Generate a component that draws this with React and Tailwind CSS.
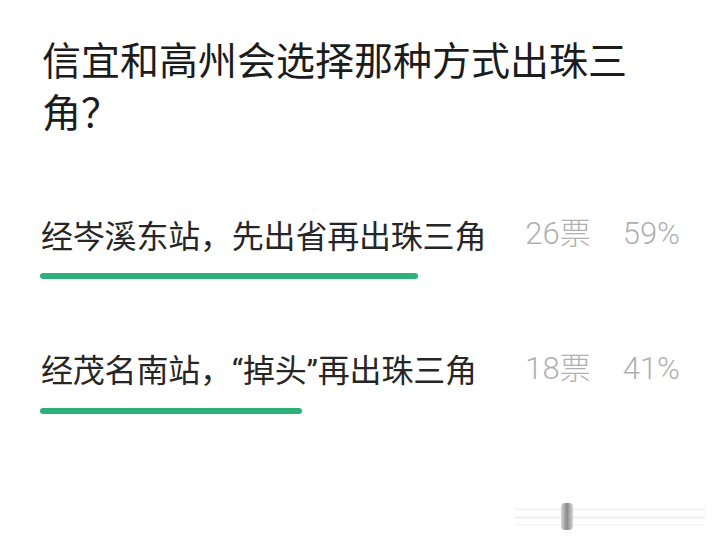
const latin = { fontFamily: "Roboto, sans-serif" };

const options = [
  { id: 1, label: <>经岑溪东站，先出省再出珠三角</>, votes: 26, pct: 59 },
  {
    id: 2,
    label: (
      <>
        经茂名南站，<span style={latin}>“</span>掉头<span style={latin}>”</span>再出珠三角
      </>
    ),
    votes: 18,
    pct: 41,
  },
];

function App() {
  return (
    <div
      className="relative w-[720px] h-[544px] bg-white overflow-hidden px-10 pt-[32px]"
      style={{ fontFamily: '"Noto Sans CJK SC", "Noto Sans", sans-serif' }}
    >
      <h1 className="text-[39px] leading-[52px] text-[#1c1c1c] font-normal pl-[2px] pr-[50px]">
        信宜和高州会选择那种方式出珠三角？
      </h1>

      <div className="mt-[76px] flex flex-col gap-[68px]">
        {options.map((o) => (
          <div key={o.id} className="flex flex-col gap-[17px]">
            <div className="flex items-center justify-between h-[44px]">
              <span className="text-[32px] leading-[44px] text-[#262626] pl-[1px] tracking-[-0.2px]">
                {o.label}
              </span>
              <div
                className="flex items-center gap-8 text-[31px] leading-[44px] text-[#b0b0b0] font-light"
                style={{ fontFamily: 'Roboto, "Noto Sans CJK SC", sans-serif' }}
              >
                <span>{o.votes}票</span>
                <span>{o.pct}%</span>
              </div>
            </div>
            <div className="h-[6px]">
              <div
                className="h-full rounded-full bg-[#2eb07b]"
                style={{ width: `${o.pct}%` }}
              />
            </div>
          </div>
        ))}
      </div>

      {/* faint watermark bottom right */}
      <div className="absolute left-[515px] top-[508px] w-[190px] flex flex-col gap-[5px] opacity-60">
        <div className="h-[3px] bg-[#f0f0f0]" />
        <div className="h-[3px] bg-[#ececec]" />
        <div className="h-[2px] bg-[#f3f3f3]" />
      </div>
      <div className="absolute left-[561px] top-[503px] w-[12px] h-[27px] rounded-[4px] bg-gradient-to-r from-[#d8d8d8] via-[#8a8a8a] to-[#d8d8d8]" />
    </div>
  );
}

export default App;
